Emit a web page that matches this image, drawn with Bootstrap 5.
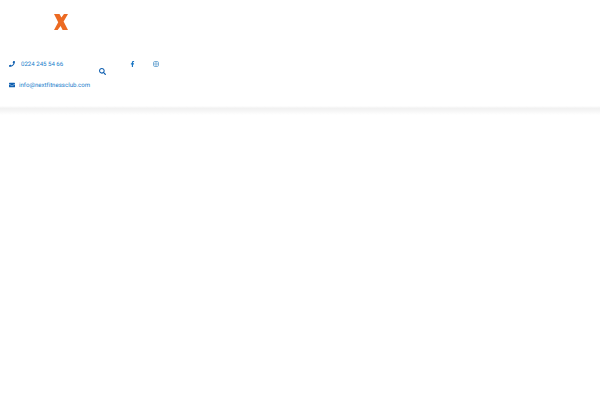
<!DOCTYPE html>
<html lang="tr">
<head>
<meta charset="utf-8">
<title>Next Fitness Club</title>
<link href="https://cdn.jsdelivr.net/npm/bootstrap@5.3.0/dist/css/bootstrap.min.css" rel="stylesheet">
<style>
body { background: #fff; font-family: Roboto, "Liberation Sans", sans-serif; }
.site-head { height: 106px; }
.head-fade { height: 9px; background: linear-gradient(#fff, #f1f1f1 25%, #f5f5f5 50%, #fff); }
.logo-row { height: 58px; padding-left: 54px; padding-top: 14px; }
.logo-x { width: 14px; height: 16px; display: block; }
.info-col { width: 99px; padding-left: 9px; gap: 9px; }
.info-line { font-size: 6.1px; line-height: 11px; color: #1a80cc; text-decoration: none; white-space: nowrap; text-rendering: geometricPrecision; }
.info-txt { padding-top: 1px; }
.ic { fill: #0f5fb0; display: block; flex: none; }
.ic-phone { width: 6px; height: 6px; margin-right: 6px; }
.ic-mail { width: 6px; height: 6px; margin-right: 4px; }
.ic-search { width: 7px; height: 7px; margin-top: 10px; }
.social-row { margin-left: 24px; margin-top: 3px; gap: 18px; }
.ic-fb { width: 5px; height: 6px; fill: #1a76c4; }
.ic-ig { width: 6px; height: 6px; fill: none; stroke: #7aaed6; stroke-width: 1; }
</style>
</head>
<body>
<header class="site-head bg-white">
  <div class="logo-row">
    <svg class="logo-x" viewBox="0 0 14 16" aria-label="Next Fitness Club"><polygon fill="#ec6a22" points="0,0 5.5,0 7.4,3.6 10,0 14,0 9.6,7.6 14,16 8.6,16 6.6,12 3.6,16 0,16 4.2,8.2"/></svg>
  </div>
  <div class="d-flex align-items-start">
    <div class="info-col d-flex flex-column">
      <a class="info-line d-flex align-items-center" href="#">
        <svg class="ic ic-phone" viewBox="0 0 512 512"><path d="M493.4 24.6l-104-24c-11.3-2.6-22.9 3.3-27.5 13.9l-48 112c-4.2 9.8-1.4 21.3 6.9 28l60.6 49.6c-36 76.7-98.9 140.5-177.2 177.2l-49.6-60.6c-6.8-8.3-18.2-11.1-28-6.9l-112 48C3.9 366.5-2 378.1.6 389.4l24 104C27.1 504.2 36.7 512 48 512c256.1 0 464-207.5 464-464 0-11.2-7.7-20.9-18.6-23.4z"/></svg>
        <span class="info-txt">0224 245 54 66</span>
      </a>
      <a class="info-line d-flex align-items-center" href="#">
        <svg class="ic ic-mail" viewBox="0 0 512 512"><path d="M502.3 190.8c3.9-3.1 9.7-.2 9.7 4.7V400c0 26.5-21.5 48-48 48H48c-26.5 0-48-21.5-48-48V195.6c0-5 5.7-7.8 9.7-4.7 22.4 17.4 52.1 39.5 154.1 113.6 21.1 15.4 56.7 47.8 92.2 47.6 35.7.3 72-32.8 92.3-47.6 102-74.1 131.6-96.3 154-113.7zM256 320c23.2.4 56.6-29.2 73.4-41.4 132.7-96.3 142.8-104.7 173.4-128.7 5.8-4.5 9.2-11.5 9.2-18.9v-19c0-26.5-21.5-48-48-48H48C21.5 64 0 85.5 0 112v19c0 7.4 3.4 14.3 9.2 18.9 30.6 23.9 40.7 32.4 173.4 128.7 16.8 12.2 50.2 41.8 73.4 41.4z"/></svg>
        <span class="info-txt">info@nextfitnessclub.com</span>
      </a>
    </div>
    <svg class="ic ic-search" viewBox="0 0 512 512"><path d="M505 442.7L405.3 343c-4.5-4.5-10.6-7-17-7H372c27.6-35.3 44-79.7 44-128C416 93.1 322.9 0 208 0S0 93.1 0 208s93.1 208 208 208c48.3 0 92.7-16.4 128-44v16.3c0 6.4 2.5 12.5 7 17l99.7 99.7c9.4 9.4 24.6 9.4 33.9 0l28.3-28.3c9.4-9.4 9.4-24.6.1-34zM208 336c-70.7 0-128-57.2-128-128 0-70.7 57.2-128 128-128 70.7 0 128 57.2 128 128 0 70.7-57.2 128-128 128z"/></svg>
    <div class="social-row d-flex align-items-center">
      <svg class="ic ic-fb" viewBox="0 0 320 512"><path d="M279.14 288l14.22-92.66h-88.91v-60.13c0-25.35 12.42-50.06 52.24-50.06h40.42V6.26S260.43 0 225.36 0c-73.22 0-121.08 44.38-121.08 124.72v70.62H22.89V288h81.39v224h100.17V288z"/></svg>
      <svg class="ic ic-ig" viewBox="0 0 6 6"><rect x=".5" y=".5" width="5" height="5" rx="1.4"/><circle cx="3" cy="3" r="1.2"/></svg>
    </div>
  </div>
</header>
<div class="head-fade"></div>
</body>
</html>
